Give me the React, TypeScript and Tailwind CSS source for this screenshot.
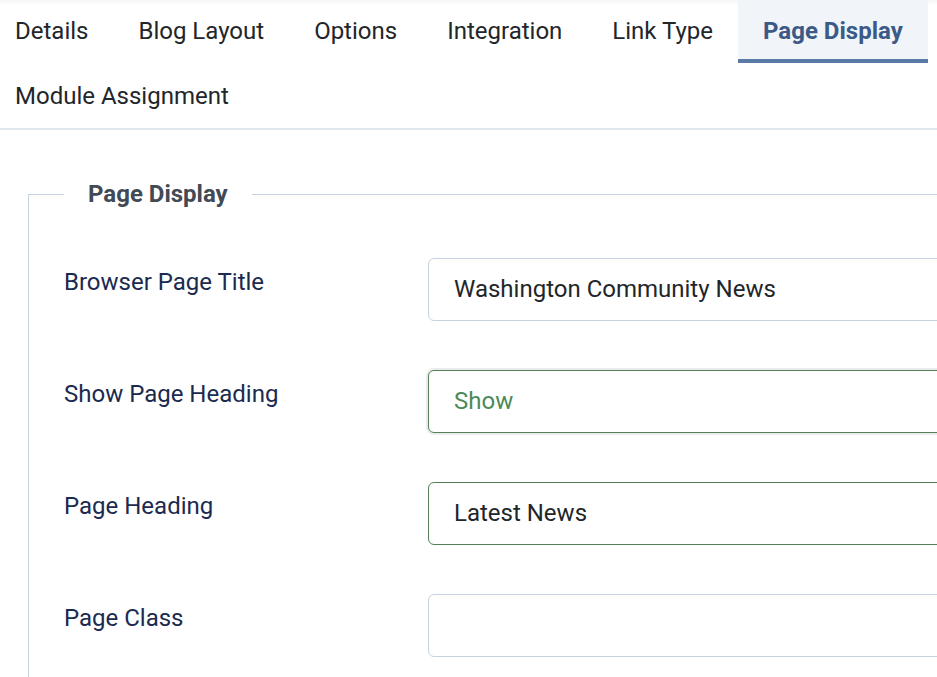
import React from 'react';

const tabs = [
  { label: 'Details' },
  { label: 'Blog Layout' },
  { label: 'Options' },
  { label: 'Integration' },
  { label: 'Link Type' },
  { label: 'Page Display', active: true },
  { label: 'Module Assignment' },
];

type Field = {
  label: string;
  value: string;
  variant?: 'valid' | 'focus';
};

const fields: Field[] = [
  { label: 'Browser Page Title', value: 'Washington Community News' },
  { label: 'Show Page Heading', value: 'Show', variant: 'focus' },
  { label: 'Page Heading', value: 'Latest News', variant: 'valid' },
  { label: 'Page Class', value: '' },
];

function FieldRow({ field }: { field: Field }) {
  const box =
    field.variant === 'focus'
      ? 'border-[#557f59] text-[#4b8a58] shadow-[0_0_0_2px_#ececec]'
      : field.variant === 'valid'
        ? 'border-[#557f59] text-[#22262a]'
        : 'border-[#c7d2e0] text-[#22262a]';

  return (
    <div className="flex items-start mb-[49px]">
      <div className="w-[364px] shrink-0 pt-[6px] text-[24px] leading-[36px] text-[#1b2a4f]">
        {field.label}
      </div>
      <div
        className={`h-[63px] w-[600px] shrink-0 rounded-[6px] border bg-white px-[25px] pb-[2px] flex items-center text-[24px] ${box}`}
      >
        {field.value}
      </div>
    </div>
  );
}

export default function App() {
  return (
    <div className="w-[937px] h-[677px] overflow-hidden bg-white font-['Roboto',sans-serif]">
      {/* Tab strip */}
      <div className="border-b-2 border-[#dfe6ee] shadow-[inset_0_5px_4px_-3px_rgba(0,0,0,0.05)]">
        <div className="-ml-[10px] flex flex-wrap gap-y-[2px]">
          {tabs.map((t) => (
            <div
              key={t.label}
              className={`h-[63px] px-[25px] flex items-center border-b-4 pt-[3px] text-[24px] ${
                t.active
                  ? 'bg-[#f1f4f9] border-[#5a7ba5] text-[#3c5a87] font-bold'
                  : 'border-transparent text-[#22262a]'
              }`}
            >
              {t.label}
            </div>
          ))}
        </div>
      </div>

      {/* Fieldset */}
      <div className="pl-[28px] pt-[46px]">
        <fieldset className="w-[1000px] border border-[#c7d2e0] pl-[35px] pt-[46px]">
          <legend className="px-[24px] text-[24px] leading-[36px] font-bold text-[#414a55]">
            Page Display
          </legend>
          {fields.map((f) => (
            <FieldRow key={f.label} field={f} />
          ))}
        </fieldset>
      </div>
    </div>
  );
}
